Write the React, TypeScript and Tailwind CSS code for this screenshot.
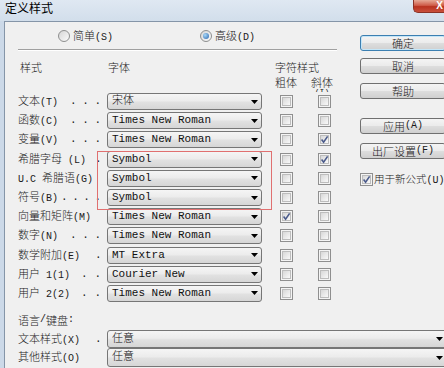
import React from "react";

const isAscii = (s: string) => /^[\x20-\x7E]+$/.test(s);

function MT({ t }: { t: string }) {
  const parts = t.split(/([\x20-\x7E]+)/).filter(Boolean);
  return (
    <>
      {parts.map((p, i) =>
        isAscii(p) ? (
          <span key={i} className="font-['Liberation_Mono',monospace] text-[10px] whitespace-pre">
            {p}
          </span>
        ) : (
          <span key={i}>{p}</span>
        )
      )}
    </>
  );
}

function Combo({ text, className }: { text: string; className: string }) {
  return (
    <div
      className={`${className} flex items-center rounded-[3px] border border-[#767676] bg-[linear-gradient(#f5f5f5,#ececec_45%,#e1e1e1_55%,#d6d6d6)] pl-[4px] pr-[3px]`}
    >
      <span className="flex-1 font-['Liberation_Mono','Noto_Sans_CJK_SC',monospace] text-[11px] leading-none text-[#111] whitespace-pre">
        {text}
      </span>
      <svg width="7" height="4" viewBox="0 0 7 4" className="shrink-0">
        <path d="M0 0H7L3.5 4Z" fill="#000" />
      </svg>
    </div>
  );
}

function Check({ on }: { on?: boolean }) {
  return (
    <div className="w-[13px] h-[13px] shrink-0 border border-[#8f8f8f] bg-[#f4f4f4] p-[1px]">
      <div className="relative w-full h-full border border-[#bdbdbd] bg-linear-to-br from-[#d8d8d8] to-[#f9f9f9]">
        {on && (
          <svg width="9" height="9" viewBox="0 0 9 9" className="absolute left-[-1px] top-[-1px]">
            <path d="M1.6 4.6 L3.6 7.2 L7.6 1.4" fill="none" stroke="#4a5a8a" strokeWidth="1.6" />
          </svg>
        )}
      </div>
    </div>
  );
}

function Radio({ on }: { on?: boolean }) {
  return (
    <div className="w-[12px] h-[12px] shrink-0 rounded-full border border-[#8e8f8f] bg-linear-to-br from-[#d6d6d6] to-[#fbfbfb] flex items-center justify-center">
      {on && (
        <div className="w-[6px] h-[6px] rounded-full bg-[radial-gradient(circle_at_35%_35%,#a8d8f8,#2a64ad)]" />
      )}
    </div>
  );
}

function Btn({ t, def, className }: { t: string; def?: boolean; className: string }) {
  return (
    <div
      className={`${className} w-[86px] h-[16px] shrink-0 rounded-[3px] border ${
        def ? "border-[#3c7fb1] shadow-[inset_0_0_0_1px_#c4e6f8]" : "border-[#707070]"
      } bg-[linear-gradient(#f4f4f4,#ebebeb_50%,#dedede_50%,#d0d0d0)] flex items-center justify-center text-[11px] leading-none`}
    >
      <MT t={t} />
    </div>
  );
}

const dotW: Record<number, string> = {
  1: "w-[6px]",
  2: "w-[20px]",
  3: "w-[31px]",
  4: "w-[40px]",
};

function Label({ t, dots }: { t: string; dots: number }) {
  return (
    <div className="w-[89px] shrink-0 flex items-center text-[11px] leading-none">
      <span className="whitespace-pre">
        <MT t={t} />
      </span>
      {dots > 0 && (
        <span className={`${dotW[dots]} ml-auto mr-[6px] flex justify-between font-['Liberation_Mono',monospace] text-[11px]`}>
          {Array.from({ length: dots }).map((_, i) => (
            <span key={i}>.</span>
          ))}
        </span>
      )}
    </div>
  );
}

const rows: { label: string; dots: number; font: string; b?: boolean; i?: boolean }[] = [
  { label: "文本(T)", dots: 3, font: "宋体" },
  { label: "函数(C)", dots: 3, font: "Times New Roman" },
  { label: "变量(V)", dots: 3, font: "Times New Roman", i: true },
  { label: "希腊字母 (L)", dots: 1, font: "Symbol", i: true },
  { label: "U.C 希腊语(G)", dots: 0, font: "Symbol" },
  { label: "符号(B)", dots: 4, font: "Symbol" },
  { label: "向量和矩阵(M)", dots: 0, font: "Times New Roman", b: true },
  { label: "数字(N)", dots: 3, font: "Times New Roman" },
  { label: "数学附加(E)", dots: 1, font: "MT Extra" },
  { label: "用户 1(1)", dots: 2, font: "Courier New" },
  { label: "用户 2(2)", dots: 2, font: "Times New Roman" },
];

export default function App() {
  return (
    <div className="w-[444px] h-[368px] overflow-hidden bg-[#ccd9e8] flex flex-col font-['Noto_Sans_CJK_SC',sans-serif] font-light text-[#1a1a1a]">
      {/* title bar */}
      <div className="h-[21px] shrink-0 flex items-start justify-between bg-[linear-gradient(#dfe8f2,#d2deeb)]">
        <span className="pl-[5px] pt-[1px] text-[12px] leading-[14px] text-black font-normal">定义样式</span>
        <div className="w-[31px] h-[13px] rounded-bl-[5px] border-b border-l border-[#8a3226] bg-[linear-gradient(#e6a996,#cf5c49_45%,#b9321f_55%,#c9503c)] flex items-center justify-end pr-[1px] text-white text-[10px] font-bold leading-none font-['Liberation_Sans',sans-serif]">
          X
        </div>
      </div>
      <div className="flex-1 flex min-h-0">
        <div className="w-[4px] shrink-0" />
        <div className="relative flex-1 flex flex-col border-l border-t border-[#8595a8] bg-[#f0f0f0]">
          <div className="flex">
            {/* left column */}
            <div className="w-[345px] shrink-0 pl-[13px] flex flex-col">
              <div className="mt-[6px] h-[16px] flex items-center text-[11px] leading-none">
                <div className="ml-[40px] w-[142px] flex items-center">
                  <Radio />
                  <span className="ml-[3px]">
                    <MT t="简单(S)" />
                  </span>
                </div>
                <div className="flex items-center">
                  <Radio on />
                  <span className="ml-[3px]">
                    <MT t="高级(D)" />
                  </span>
                </div>
              </div>
              <div className="mt-[5px] w-[319px] h-[2px] border-t border-b border-t-[#a0a0a0] border-b-white" />
              <div className="mt-[8px] h-[16px] flex items-center text-[11px] leading-none">
                <div className="w-[89px] pl-[2px]">样式</div>
                <div className="w-[168px] pl-[1px]">字体</div>
                <div>字符样式</div>
              </div>
              <div className="h-[17px] flex items-start text-[11px] overflow-hidden">
                <div className="w-[257px]" />
                <div className="w-[36px] leading-[14px]">粗体</div>
                <div className="flex flex-col items-center">
                  <span className="leading-[14px]">斜体</span>
                  <span className="font-['Liberation_Mono',monospace] text-[8px] leading-[8px] -mt-[1px]">(I)</span>
                </div>
              </div>
              {rows.map((r, idx) => (
                <div key={idx} className="h-[19.2px] flex items-center">
                  <Label t={r.label} dots={r.dots} />
                  <Combo text={r.font} className="w-[155px] h-[17px]" />
                  <div className="ml-[18px]">
                    <Check on={r.b} />
                  </div>
                  <div className="ml-[25px]">
                    <Check on={r.i} />
                  </div>
                </div>
              ))}
            </div>
            {/* right column */}
            <div className="ml-[10px] pt-[13px] flex flex-col">
              <Btn t="确定" def className="" />
              <Btn t="取消" className="mt-[7px]" />
              <Btn t="帮助" className="mt-[9px]" />
              <Btn t="应用(A)" className="mt-[19px]" />
              <Btn t="出厂设置(F)" className="mt-[9px]" />
              <div className="mt-[14px] flex items-center text-[10.5px] leading-none">
                <Check on />
                <span className="ml-[1px] whitespace-nowrap">
                  <MT t="用于新公式(U)" />
                </span>
              </div>
            </div>
          </div>
          {/* bottom section */}
          <div className="pl-[13px] flex flex-col">
            <div className="mt-[9px] h-[16px] flex items-center text-[11px] leading-none">
              <MT t="语言/键盘:" />
            </div>
            <div className="mt-[2px] h-[18px] flex items-center">
              <Label t="文本样式(X)" dots={1} />
              <Combo text="任意" className="w-[340px] h-[18px] shrink-0" />
            </div>
            <div className="h-[19px] flex items-center">
              <Label t="其他样式(O)" dots={0} />
              <Combo text="任意" className="w-[340px] h-[19px] shrink-0" />
            </div>
          </div>
          {/* annotation outline */}
          <div className="absolute left-[92px] top-[129px] w-[175px] h-[59px] border border-[#e07070] pointer-events-none" />
        </div>
      </div>
    </div>
  );
}
